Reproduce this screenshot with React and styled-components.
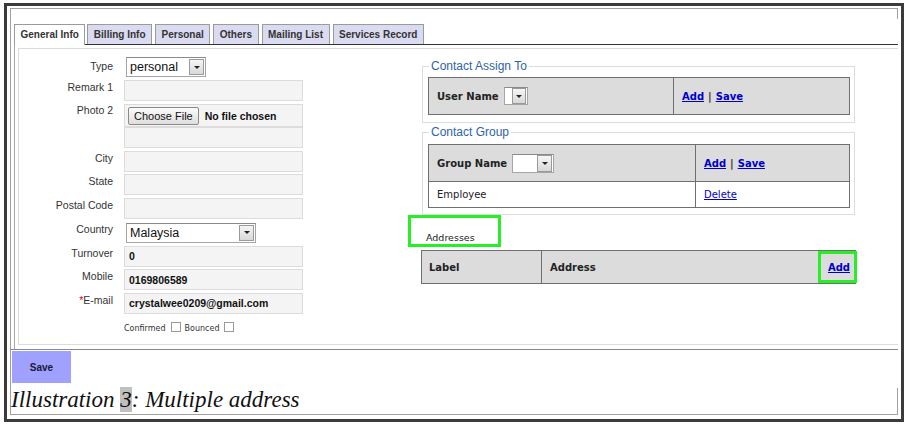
import React from 'react';
import styled, { createGlobalStyle } from 'styled-components';

const GlobalStyle = createGlobalStyle`
  html, body { margin: 0; padding: 0; background: #fff; }
  body { font-family: "Liberation Sans", Arial, sans-serif; }
  * { box-sizing: border-box; }
`;

const Page = styled.div`
  padding: 3px 0 0 4px;
`;

const Frame = styled.div`
  width: 900px;
  height: 419px;
  border: 3px solid #3b3b3b;
  padding: 2px 0 0 3px;
`;

const DocFrame = styled.div`
  position: relative;
  width: 888px;
  height: 407px;
  border: 1px solid #a0a0a0;
  border-right: none;
  display: flex;
  flex-direction: column;
  &::before,
  &::after {
    content: '';
    position: absolute;
    right: 0;
    width: 1px;
    background: #a0a0a0;
  }
  &::before { top: 0; height: 10px; }
  &::after { bottom: 0; height: 26px; }
`;

const TabBar = styled.div`
  display: flex;
  align-items: flex-end;
  gap: 3px;
  margin: 15px 0 0 3px;
  border-bottom: 1px solid #333;
  height: 21px;
  flex: none;
`;

const Tab = styled.div`
  height: ${p => (p.$active ? 21 : 20)}px;
  margin-bottom: ${p => (p.$active ? -1 : 0)}px;
  margin-right: ${p => (p.$active ? -1 : 0)}px;
  padding: 0 5.5px;
  border: 1px solid #9a9a9a;
  border-bottom: none;
  background: ${p => (p.$active ? '#fff' : '#dadaf0')};
  font: bold 10px/19px "Liberation Sans", Arial, sans-serif;
  color: #333;
  white-space: nowrap;
`;

const Panel = styled.div`
  border-bottom: 1px solid #888;
  flex: none;
`;

const PanelInner = styled.div`
  margin-left: 3px;
  border-left: 1px solid #a8a8a8;
  padding: 3px 0 4px 3px;
`;

const ContentBox = styled.div`
  height: 297px;
  border: 1px solid #dcdcdc;
  border-right: none;
  display: flex;
`;

const Form = styled.div`
  width: 403px;
  padding-top: 7px;
  display: flex;
  flex-direction: column;
  gap: 2.7px;
`;

const Row = styled.div`
  display: flex;
  align-items: flex-start;
  height: 21px;
`;

const Label = styled.div`
  width: 94px;
  margin-right: 11px;
  padding-top: ${p => (p.$top != null ? p.$top : 1)}px;
  text-align: right;
  font: 10.5px/13px "Liberation Sans", Arial, sans-serif;
  color: #333;
  white-space: nowrap;
`;

const Star = styled.span`
  color: #d00;
`;

const Input = styled.div`
  width: 179px;
  height: 21px;
  background: #f4f4f4;
  border: 1px solid #dcdcdc;
  padding-left: 4px;
  display: flex;
  align-items: center;
  font: bold 10.5px "Liberation Sans", Arial, sans-serif;
  color: #111;
  white-space: nowrap;
`;

const FileInput = styled(Input)`
  height: 23px;
  margin-top: 1px;
  padding-left: 3px;
  gap: 6px;
`;

const ChooseButton = styled.span`
  height: 18px;
  padding: 0 5px;
  border: 1px solid #8a8a8a;
  border-radius: 2px;
  background: linear-gradient(#fbfbfb, #dedede);
  font: 11px/16px "Liberation Sans", Arial, sans-serif;
  color: #111;
`;

const SelectBox = styled.div`
  display: flex;
  align-items: center;
  width: ${p => p.$w}px;
  height: ${p => p.$h}px;
  margin: ${p => p.$mt || 0}px 0 0 ${p => p.$ml || 0}px;
  background: #fff;
  border: 1px solid #a5a5a5;
  border-top-color: #8a8a8a;
  padding: 0 1px 0 3px;
  font: ${p => p.$fs || 12.5}px "Liberation Sans", Arial, sans-serif;
  color: #111;
`;

const ArrowBtn = styled.span`
  flex: none;
  margin-left: auto;
  width: ${p => p.$w || 15}px;
  height: ${p => p.$h}px;
  border: 1px solid #9a9a9a;
  background: linear-gradient(#f6f6f6, #d8d8d8);
  display: flex;
  align-items: center;
  justify-content: center;
  &::after {
    content: '';
    border-left: 3px solid transparent;
    border-right: 3px solid transparent;
    border-top: 3px solid #222;
  }
`;

const CheckRow = styled.div`
  display: flex;
  align-items: flex-end;
  gap: 4px;
  margin: 5px 0 0 105px;
  font: 8px/10px "DejaVu Sans", Verdana, sans-serif;
  color: #333;
`;

const CheckItem = styled.span`
  display: inline-flex;
  align-items: flex-end;
  gap: 5px;
`;

const CheckBox = styled.span`
  width: 10px;
  height: 10px;
  margin-bottom: 2px;
  border: 1px solid #9a9a9a;
  background: #fff;
`;

const RightCol = styled.div`
  width: 433px;
  padding-top: 10px;
  display: flex;
  flex-direction: column;
`;

const Fieldset = styled.fieldset`
  margin: ${p => p.$mt || 0}px 0 0 0;
  padding: ${p => p.$pt}px 4px ${p => p.$pb}px 5px;
  border: 1px solid #dcdcdc;
  min-width: 0;
`;

const Legend = styled.legend`
  margin-left: 1px;
  padding: 0 2px;
  font: 12px/14px "Liberation Sans", Arial, sans-serif;
  color: #2f63a8;
`;

const Table = styled.table`
  width: ${p => p.$w}px;
  margin-left: ${p => p.$ml || 0}px;
  border-collapse: collapse;
  border: 1px solid #6f6f6f;
  table-layout: fixed;
`;

const Cell = styled.td`
  width: ${p => (p.$w ? `${p.$w}px` : 'auto')};
  height: ${p => p.$h}px;
  padding: 0 ${p => (p.$pr != null ? p.$pr : 8)}px 0 ${p => (p.$pl != null ? p.$pl : 8)}px;
  border: 1px solid #6f6f6f;
  background: ${p => (p.$head ? '#dcdcdc' : '#fff')};
  font: ${p => (p.$head ? 'bold 10px' : '10px')} "DejaVu Sans", Verdana, sans-serif;
  color: #222;
  vertical-align: middle;
  white-space: nowrap;
`;

const CellInner = styled.div`
  display: flex;
  align-items: center;
  justify-content: ${p => p.$justify || 'flex-start'};
  gap: 5px;
`;

const Link = styled.a`
  color: #0000cc;
  text-decoration: underline;
  font-weight: inherit;
  cursor: pointer;
`;

const Sep = styled.span`
  color: #333;
  margin: 0 4px;
`;

const AddrTitle = styled.div`
  position: relative;
  margin-top: 16px;
  padding-left: 4px;
  font: 9.5px/13px "DejaVu Sans", Verdana, sans-serif;
  color: #222;
`;

const AddrWrap = styled.div`
  position: relative;
  margin-top: 6px;
`;

const Highlight = styled.span`
  position: absolute;
  left: ${p => (p.$left != null ? `${p.$left}px` : 'auto')};
  right: ${p => (p.$right != null ? `${p.$right}px` : 'auto')};
  top: ${p => p.$top}px;
  width: ${p => p.$w}px;
  height: ${p => p.$h}px;
  border: 3px solid #26ef26;
  pointer-events: none;
`;

const SaveBar = styled.div`
  flex: none;
`;

const SaveButton = styled.button`
  width: 59px;
  height: 32px;
  margin: 1px 0 0 1px;
  border: none;
  background: #a0a0ff;
  font: bold 10px "Liberation Sans", Arial, sans-serif;
  color: #1a1a3a;
  padding: 0;
`;

const Caption = styled.div`
  margin-top: 4px;
  font: italic 23px/26px "Liberation Serif", "Times New Roman", serif;
  color: #111;
  white-space: nowrap;
`;

const Mark = styled.span`
  background: #c0c0c0;
`;

const tabs = [
  { name: 'General Info', active: true },
  { name: 'Billing Info' },
  { name: 'Personal' },
  { name: 'Others' },
  { name: 'Mailing List' },
  { name: 'Services Record' },
];

const addressRows = [
  { label: 'City' },
  { label: 'State' },
  { label: 'Postal Code' },
];

export default function App() {
  return (
    <>
      <GlobalStyle />
      <Page>
        <Frame>
          <DocFrame>
            <TabBar>
              {tabs.map(t => (
                <Tab key={t.name} $active={t.active}>{t.name}</Tab>
              ))}
            </TabBar>
            <Panel>
              <PanelInner>
                <ContentBox>
                  <Form>
                    <Row>
                      <Label $top={4}>Type</Label>
                      <SelectBox $w={80} $h={20} $mt={1} $ml={2}>
                        personal
                        <ArrowBtn $h={16} />
                      </SelectBox>
                    </Row>
                    <Row>
                      <Label>Remark 1</Label>
                      <Input />
                    </Row>
                    <Row>
                      <Label>Photo 2</Label>
                      <FileInput>
                        <ChooseButton>Choose File</ChooseButton>
                        No file chosen
                      </FileInput>
                    </Row>
                    <Row>
                      <Label />
                      <Input />
                    </Row>
                    {addressRows.map(r => (
                      <Row key={r.label}>
                        <Label>{r.label}</Label>
                        <Input />
                      </Row>
                    ))}
                    <Row>
                      <Label>Country</Label>
                      <SelectBox $w={130} $h={20} $mt={1} $ml={2}>
                        Malaysia
                        <ArrowBtn $h={16} />
                      </SelectBox>
                    </Row>
                    <Row>
                      <Label>Turnover</Label>
                      <Input>0</Input>
                    </Row>
                    <Row>
                      <Label>Mobile</Label>
                      <Input>0169806589</Input>
                    </Row>
                    <Row>
                      <Label><Star>*</Star>E-mail</Label>
                      <Input>crystalwee0209@gmail.com</Input>
                    </Row>
                    <CheckRow>
                      <CheckItem>Confirmed <CheckBox /></CheckItem>
                      <CheckItem>Bounced <CheckBox /></CheckItem>
                    </CheckRow>
                  </Form>

                  <RightCol>
                    <Fieldset $pt={4} $pb={7}>
                      <Legend>Contact Assign To</Legend>
                      <Table $w={422}>
                        <tbody>
                          <tr>
                            <Cell $head $w={245} $h={37}>
                              <CellInner>
                                User Name
                                <SelectBox $w={24} $h={18} $fs={10}>
                                  <ArrowBtn $w={14} $h={16} />
                                </SelectBox>
                              </CellInner>
                            </Cell>
                            <Cell $head $h={37}>
                              <Link>Add</Link><Sep>|</Sep><Link>Save</Link>
                            </Cell>
                          </tr>
                        </tbody>
                      </Table>
                    </Fieldset>

                    <Fieldset $mt={2} $pt={5} $pb={6}>
                      <Legend>Contact Group</Legend>
                      <Table $w={422}>
                        <tbody>
                          <tr>
                            <Cell $head $w={267} $h={37}>
                              <CellInner>
                                Group Name
                                <SelectBox $w={42} $h={19} $fs={10}>
                                  <ArrowBtn $w={15} $h={17} />
                                </SelectBox>
                              </CellInner>
                            </Cell>
                            <Cell $head $h={37}>
                              <Link>Add</Link><Sep>|</Sep><Link>Save</Link>
                            </Cell>
                          </tr>
                          <tr>
                            <Cell $h={26}>Employee</Cell>
                            <Cell $h={26}><Link>Delete</Link></Cell>
                          </tr>
                        </tbody>
                      </Table>
                    </Fieldset>

                    <AddrTitle>
                      Addresses
                      <Highlight $left={-14} $top={-16} $w={93} $h={32} />
                    </AddrTitle>

                    <AddrWrap>
                      <Table $w={435} $ml={-1}>
                        <tbody>
                          <tr>
                            <Cell $head $w={120} $h={33} $pl={7}>Label</Cell>
                            <Cell $head $h={33} $pr={5}>
                              <CellInner $justify="space-between">
                                <span>Address</span>
                                <Link>Add</Link>
                              </CellInner>
                            </Cell>
                          </tr>
                        </tbody>
                      </Table>
                      <Highlight $right={-2} $top={1} $w={39} $h={32} />
                    </AddrWrap>
                  </RightCol>
                </ContentBox>
              </PanelInner>
            </Panel>
            <SaveBar>
              <SaveButton>Save</SaveButton>
            </SaveBar>
            <Caption>
              Illustration <Mark>3</Mark>: Multiple address
            </Caption>
          </DocFrame>
        </Frame>
      </Page>
    </>
  );
}
